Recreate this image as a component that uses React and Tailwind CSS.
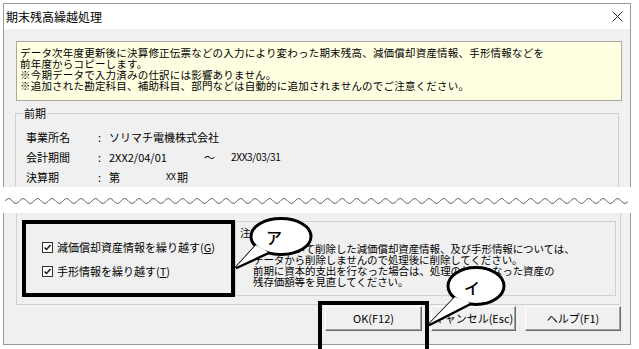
import React from 'react';

const jp = "font-['Noto_Sans_CJK_JP','Noto_Sans',sans-serif]";

function wavePoints() {
  const pts = [];
  for (let x = 5; x <= 628; x += 0.5) {
    const y = 14 - 2.4 * Math.sin(((x - 5) / 14.5) * Math.PI * 2);
    pts.push(`${x},${y.toFixed(2)}`);
  }
  return pts.join(' ');
}

const CheckBox = () => (
  <span className="w-[11px] h-[11px] border border-[#333] bg-white flex items-center justify-center shrink-0">
    <svg width="9" height="9" viewBox="0 0 9 9">
      <path d="M1.5 4.5 L3.5 6.5 L7.5 2" fill="none" stroke="#111" strokeWidth="1.4" />
    </svg>
  </span>
);

const Button = ({ children, w }) => (
  <button className={`${w} h-[25px] bg-[#f0f0f0] border border-t-white border-l-white border-r-[#6a6a6a] border-b-[#6a6a6a] shadow-[inset_-1px_-1px_0_#a0a0a0] text-[11px] leading-none text-black`}>
    {children}
  </button>
);

const Callout = ({ cx, cy, rx, ry, base, tip, label, tx, ty }) => {
  const tail = `${base[0][0]},${base[0][1]} ${tip[0]},${tip[1]} ${base[1][0]},${base[1][1]}`;
  return (
    <g>
      <polygon points={tail} fill="white" stroke="black" strokeWidth="3" strokeLinejoin="miter" />
      <ellipse cx={cx} cy={cy} rx={rx} ry={ry} fill="white" stroke="black" strokeWidth="3" />
      <polygon points={tail} fill="white" stroke="none" transform="translate(0 -1)" />
      <text x={tx} y={ty} fontSize="16" textAnchor="middle" dominantBaseline="central" fontFamily="Noto Sans CJK JP, sans-serif" fontWeight="500">{label}</text>
    </g>
  );
};

export default function App() {
  return (
    <div className={`relative w-[639px] h-[349px] bg-white overflow-hidden text-black ${jp}`}>
      {/* upper half of the dialog */}
      <div className="pt-[3px] pl-[3px]">
        <div className="w-[628px] h-[184px] border border-b-0 border-[#9a9a9a] bg-[#f0f0f0] overflow-hidden">
          <div className="h-[25px] bg-white flex items-center justify-between pl-[2px] pr-[7px]">
            <span className="text-[12px] leading-none">期末残高繰越処理</span>
            <svg width="11" height="11" viewBox="0 0 11 11">
              <path d="M0.5 0.5 L10.5 10.5 M10.5 0.5 L0.5 10.5" stroke="#222" strokeWidth="1" />
            </svg>
          </div>
          <div className="mt-[12px] ml-[12px] w-[606px] h-[60px] bg-[#ffffe1] border border-[#a9a9a0] pt-[5px] pl-[3px] text-[10.5px] leading-[11px] tracking-[0.2px]">
            <p>
              データ次年度更新後に決算修正伝票などの入力により変わった期末残高、減価償却資産情報、手形情報などを<br />
              前年度からコピーします。<br />
              ※今期データで入力済みの仕訳には影響ありません。<br />
              ※追加された勘定科目、補助科目、部門などは自動的に追加されませんのでご注意ください。
            </p>
          </div>
          <fieldset className="mt-[6px] ml-[11px] w-[604px] h-[120px] border border-[#d0d0d0] pl-[7px]">
            <legend className="px-[1px] text-[11px] leading-[12px]">前期</legend>
            <div className="ml-[3px] mt-[12px] flex flex-col gap-[8px] text-[11px] leading-[12px]">
              <div className="flex h-[12px]">
                <span className="w-[72px]">事業所名</span>
                <span className="w-[11px]">:</span>
                <span>ソリマチ電機株式会社</span>
              </div>
              <div className="flex h-[12px]">
                <span className="w-[72px]">会計期間</span>
                <span className="w-[11px]">:</span>
                <span className="w-[95px]">2XX2/04/01</span>
                <span className="w-[27px]">～</span>
                <span className="text-[10px] tracking-[-0.3px]">2XX3/03/31</span>
              </div>
              <div className="flex h-[12px]">
                <span className="w-[72px]">決算期</span>
                <span className="w-[11px]">:</span>
                <span className="w-[57px]">第</span>
                <span className="w-[11px] text-[9px] tracking-[-0.5px]">XX</span>
                <span>期</span>
              </div>
            </div>
          </fieldset>
        </div>
      </div>

      {/* break mark */}
      <div className="h-[26px]">
        <svg width="639" height="26" viewBox="0 0 639 26">
          <polyline points={wavePoints()} fill="none" stroke="#4a4a4a" strokeWidth="1" />
        </svg>
      </div>

      {/* lower half of the dialog */}
      <div className="ml-[3px] w-[628px] h-[132px] border border-t-0 border-[#9a9a9a] bg-[#f0f0f0]">
        <div className="ml-[12px] w-[605px] h-[92px] border border-t-0 border-[#d0d0d0] pt-[7px] pl-[5px] flex">
          <div className="w-[213px] h-[77px] border-[4px] border-black pt-[16px] pl-[16px] flex flex-col gap-[10px] text-[11px] leading-[14px]">
            <label className="flex items-center gap-[4px] h-[14px]">
              <CheckBox />
              <span>減価償却資産情報を繰り越す(<u>G</u>)</span>
            </label>
            <label className="flex items-center gap-[4px] h-[14px]">
              <CheckBox />
              <span>手形情報を繰り越す(<u>T</u>)</span>
            </label>
          </div>
          <div className="w-[381px] h-[75px] mt-[1px] border border-[#d0d0d0] pt-[5px] pl-[4px] text-[10.5px] leading-[11px] tracking-[-0.1px]">
            <p>注意</p>
            <p className="mt-[5px] ml-[13px]">
              当期において削除した減価償却資産情報、及び手形情報については、<br />
              データから削除しませんので処理後に削除してください。<br />
              前期に資本的支出を行なった場合は、処理の対象となった資産の<br />
              残存価額等を見直してください。
            </p>
          </div>
        </div>
        <div className="mt-[1px] pr-[9px] flex justify-end gap-[9px]">
          <Button w="w-[97px]">OK(F12)</Button>
          <Button w="w-[85px]">キャンセル(Esc)</Button>
          <Button w="w-[96px]">ヘルプ(F1)</Button>
        </div>
      </div>

      {/* annotation frame around OK */}
      <div className="absolute left-[318px] top-[301px] w-[111px] h-[60px] border-[4px] border-black" />

      {/* speech bubbles */}
      <svg className="absolute left-0 top-0 pointer-events-none" width="639" height="349" viewBox="0 0 639 349">
        <Callout cx={281} cy={236.5} rx={30} ry={18} base={[[256, 246], [268, 253]]} tip={[236, 268]} label="ア" tx={274} ty={237} />
        <Callout cx={476} cy={286} rx={28} ry={18.5} base={[[455, 298], [470, 304]]} tip={[429, 325]} label="イ" tx={472} ty={287} />
      </svg>
    </div>
  );
}
